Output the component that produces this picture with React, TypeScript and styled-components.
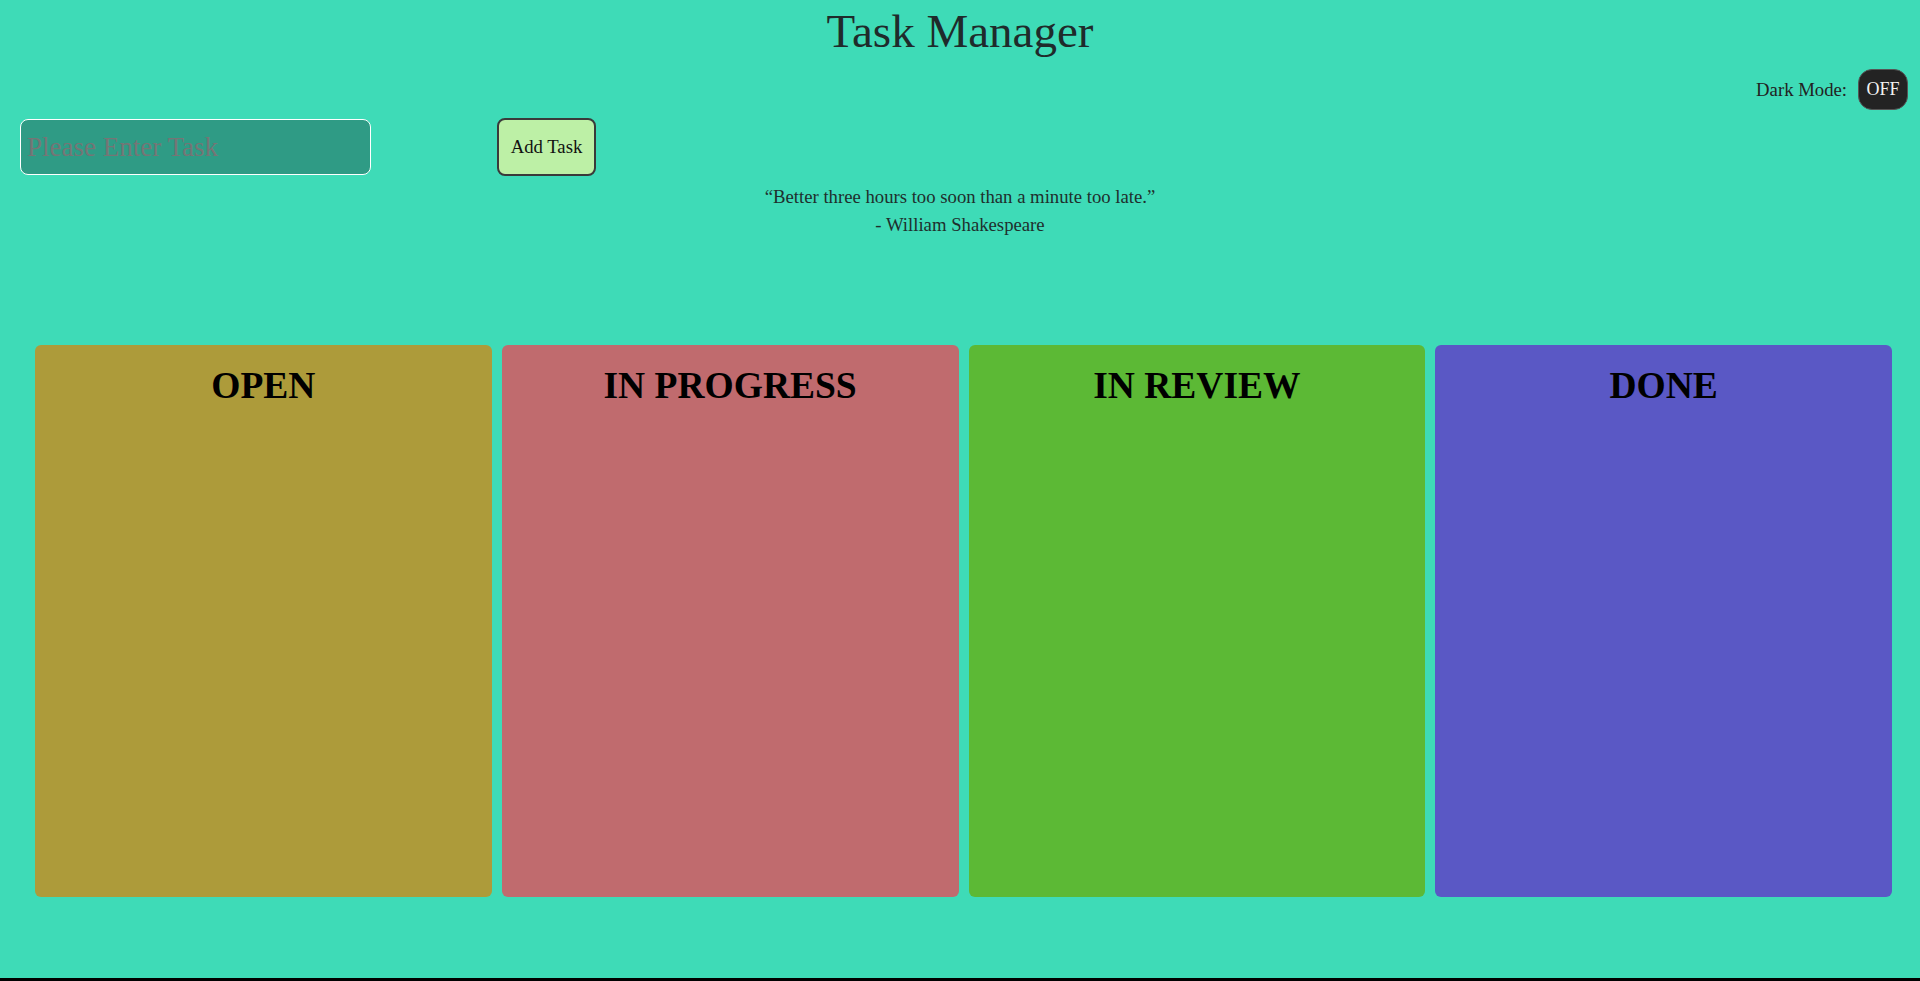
import styled, { createGlobalStyle } from "styled-components";
import { useState } from "react";

const GlobalStyle = createGlobalStyle`
  html, body {
    margin: 0;
    padding: 0;
    background: #3edbb7;
  }
  * {
    box-sizing: border-box;
  }
`;

const Page = styled.div`
  height: 981px;
  border-bottom: 3px solid #000;
  background: #3edbb7;
  font-family: "Liberation Serif", "Times New Roman", serif;
  color: #222;
`;

const Title = styled.h1`
  margin: 0;
  padding-top: 6px;
  font-size: 47px;
  font-weight: 400;
  line-height: 51px;
  text-align: center;
  color: #1f2b2b;
`;

const ModeRow = styled.div`
  display: flex;
  justify-content: flex-end;
  align-items: center;
  gap: 11px;
  margin-top: 12px;
  padding-right: 12px;
  font-size: 18.72px;
`;

const ModeButton = styled.button`
  width: 50px;
  height: 41px;
  border-radius: 14px;
  border: 1px solid #555;
  background: #232323;
  color: #f2f2f2;
  font-family: "Liberation Serif", "Times New Roman", serif;
  font-size: 18px;
  padding: 0;
  cursor: pointer;
`;

const InputRow = styled.div`
  display: flex;
  align-items: center;
  gap: 126px;
  margin-top: 8px;
  padding-left: 20px;
`;

const TaskInput = styled.input`
  width: 351px;
  height: 56px;
  border: 1px solid #fff;
  border-radius: 8px;
  background: #2f9b85;
  padding: 0 6px;
  font-family: "Liberation Serif", "Times New Roman", serif;
  font-size: 27px;
  color: #222;
  outline: none;
  ::placeholder {
    color: #747070;
  }
`;

const AddButton = styled.button`
  width: 99px;
  height: 58px;
  border: 2px solid #3a3a3a;
  border-radius: 8px;
  background: #bdf0a6;
  color: #111;
  font-family: "Liberation Serif", "Times New Roman", serif;
  font-size: 18.72px;
  padding: 0;
  cursor: pointer;
`;

const Quote = styled.div`
  margin-top: 7px;
  text-align: center;
  font-size: 18.72px;
  line-height: 28px;
  color: #1f2f2d;
`;

const Board = styled.div`
  display: flex;
  gap: 10px;
  margin-top: 106px;
  padding: 0 28px 0 35px;
`;

const Column = styled.div<{ $bg: string }>`
  flex: 1;
  height: 552px;
  border-radius: 6px;
  background: ${(p) => p.$bg};
  padding-top: 20px;
`;

const ColumnTitle = styled.h2`
  margin: 0;
  font-size: 37.5px;
  font-weight: 700;
  line-height: 42px;
  text-align: center;
  color: #000;
`;

const columns = [
  { name: "OPEN", color: "#ad9b3a" },
  { name: "IN PROGRESS", color: "#c06b6e" },
  { name: "IN REVIEW", color: "#5cb935" },
  { name: "DONE", color: "#5a58c5" },
];

const App = () => {
  const [dark, setDark] = useState(false);
  const [task, setTask] = useState("");

  return (
    <Page>
      <GlobalStyle />
      <Title>Task Manager</Title>
      <ModeRow>
        <span>Dark Mode:</span>
        <ModeButton onClick={() => setDark(!dark)}>{dark ? "ON" : "OFF"}</ModeButton>
      </ModeRow>
      <InputRow>
        <TaskInput
          placeholder="Please Enter Task"
          value={task}
          onChange={(e) => setTask(e.target.value)}
        />
        <AddButton>Add Task</AddButton>
      </InputRow>
      <Quote>
        <div>“Better three hours too soon than a minute too late.”</div>
        <div>- William Shakespeare</div>
      </Quote>
      <Board>
        {columns.map((col) => (
          <Column key={col.name} $bg={col.color}>
            <ColumnTitle>{col.name}</ColumnTitle>
          </Column>
        ))}
      </Board>
    </Page>
  );
};

export default App;
